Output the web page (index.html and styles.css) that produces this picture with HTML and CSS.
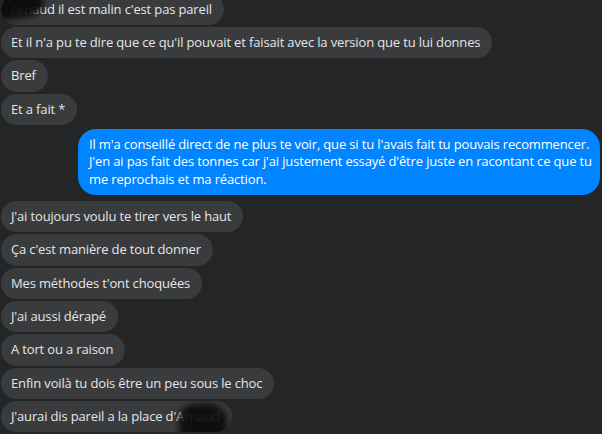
FILE: index.html
```html
<!DOCTYPE html>
<html lang="fr">

<head>
  <meta charset="UTF-8">
  <meta name="viewport" content="width=device-width, initial-scale=1.0">
  <title>Conversation</title>
  <link rel="stylesheet" href="styles.css">
</head>

<body>
  <div class="thread">
    <div class="msg in first">
      <span class="bubble">Arnaud il est malin c'est pas pareil<i class="scribble s1"></i></span>
    </div>
    <div class="msg in"><span class="bubble">Et il n'a pu te dire que ce qu'il pouvait et faisait avec la version que tu lui donnes</span></div>
    <div class="msg in"><span class="bubble">Bref</span></div>
    <div class="msg in"><span class="bubble">Et a fait *</span></div>

    <div class="msg out">
      <span class="bubble">Il m'a conseillé direct de ne plus te voir, que si tu l'avais fait tu pouvais recommencer. J'en ai pas fait des tonnes car j'ai justement essayé d'être juste en racontant ce que tu me reprochais et ma réaction.</span>
    </div>

    <div class="msg in"><span class="bubble">J'ai toujours voulu te tirer vers le haut</span></div>
    <div class="msg in"><span class="bubble">Ça c'est manière de tout donner</span></div>
    <div class="msg in"><span class="bubble">Mes méthodes t'ont choquées</span></div>
    <div class="msg in"><span class="bubble">J'ai aussi dérapé</span></div>
    <div class="msg in"><span class="bubble">A tort ou a raison</span></div>
    <div class="msg in"><span class="bubble">Enfin voilà tu dois être un peu sous le choc</span></div>
    <div class="msg in">
      <span class="bubble">J'aurai dis pareil a la place d'Arnaud<i class="scribble s2"></i></span>
    </div>
  </div>
</body>

</html>
```

FILE: styles.css
```css
html,
body {
  margin: 0;
  height: 100%;
  overflow: hidden;
  background: #242526;
}

body {
  font-family: "Open Sans", "Noto Sans", sans-serif;
  font-size: 13px;
  letter-spacing: -0.15px;
  color: #e4e6eb;
}

.thread {
  display: flex;
  flex-direction: column;
  gap: 2px;
  margin-top: -6.33px;
  padding: 0 2px 0 1px;
}

.msg {
  display: flex;
}

.msg.out {
  justify-content: flex-end;
  margin: 2px 0 4px 0;
}

.bubble {
  position: relative;
  overflow: hidden;
  padding: 7px 12px 7px 10px;
  line-height: 17.33px;
  border-radius: 18px;
  background: #3a3b3c;
  white-space: nowrap;
}

.msg.out .bubble {
  width: 511px;
  padding: 7px 0 7px 11px;
  white-space: normal;
  color: #fff;
  background: #0084ff;
}

/* redaction marks */
.scribble {
  position: absolute;
  background: #0b0b0c;
  filter: blur(3px);
}

.s1 {
  left: -8px;
  top: -8px;
  width: 50px;
  height: 32px;
  opacity: 0.95;
  transform: rotate(-8deg);
  border-radius: 6px 10px 14px 4px;
}

.s2 {
  left: 178px;
  top: 3px;
  width: 48px;
  height: 40px;
  opacity: 0.92;
  border-radius: 16px 18px 4px 10px;
}
```
